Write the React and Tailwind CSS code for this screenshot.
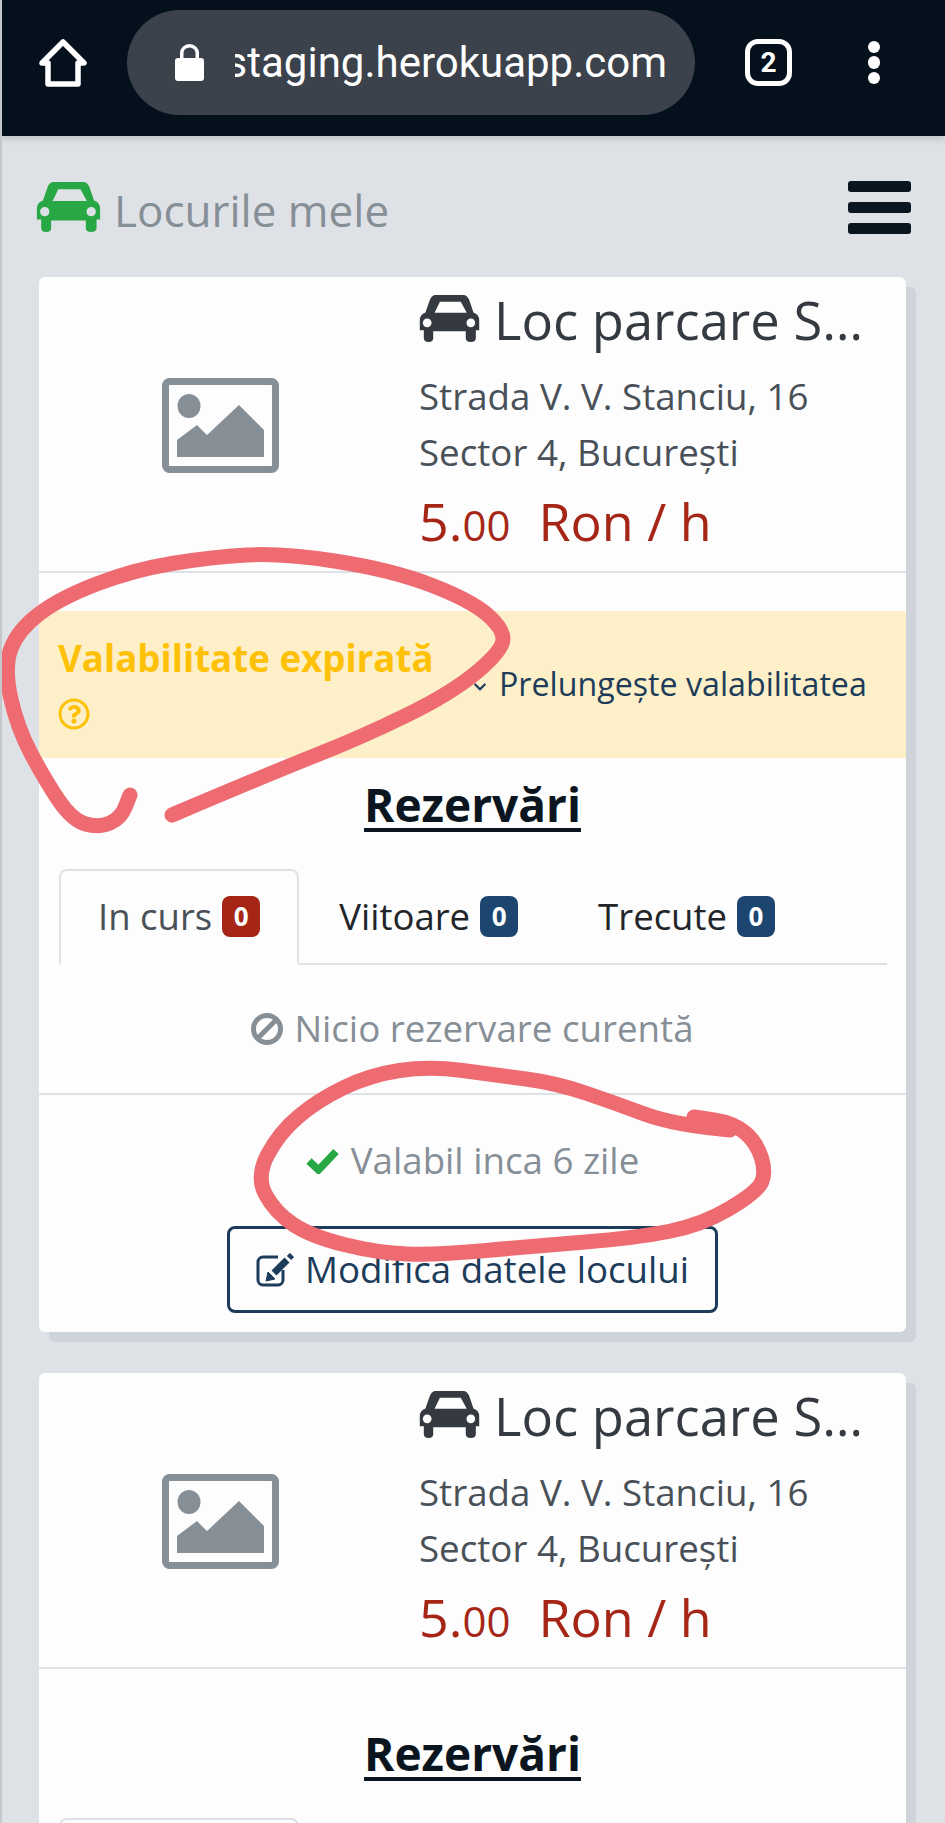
import React from 'react';
import { FaRegQuestionCircle, FaChevronDown } from 'react-icons/fa';

// marker scribbles drawn on top of the screenshot, in page coordinates
const loopOne = [[172,815],[271,773],[362,737],[452,693],[503,650],[503,628],[470,600],[392,570],[283,553],[211,557],[133,570],[60,598],[18,630],[4,667],[17,727],[45,780],[72,820],[99,828],[121,818],[130,795]];
const loopTwo = [[730,1130],[674,1125],[615,1103],[556,1083],[496,1075],[429,1066],[370,1075],[318,1100],[279,1133],[256,1177],[275,1212],[310,1236],[378,1253],[437,1255],[536,1246],[635,1238],[702,1225],[757,1192],[766,1173],[757,1143],[734,1123],[694,1117]];

function smooth(points) {
  let d = `M${points[0][0]} ${points[0][1]}`;
  for (let i = 1; i < points.length - 1; i++) {
    const mx = (points[i][0] + points[i + 1][0]) / 2;
    const my = (points[i][1] + points[i + 1][1]) / 2;
    d += ` Q${points[i][0]} ${points[i][1]} ${mx} ${my}`;
  }
  const last = points[points.length - 1];
  return d + ` L${last[0]} ${last[1]}`;
}

function CarIcon({ className }) {
  return (
    <svg viewBox="0 0 177 140" className={className} fill="currentColor" fillRule="evenodd">
      <path d="M47 0 H130 Q141 0 147 14 L160 52 Q177 58 177 75 V105 H167 V128 Q167 140 152 140 Q137 140 137 128 V108 H40 V128 Q40 140 26 140 Q12 140 12 128 V105 H0 V75 Q0 58 17 52 L30 14 Q36 0 47 0 Z M60 20 L44 53 H140 L122 20 Z M9 83 a13 13 0 1 0 26 0 a13 13 0 1 0 -26 0 Z M139 83 a13 13 0 1 0 26 0 a13 13 0 1 0 -26 0 Z" />
    </svg>
  );
}

function PlaceholderImage() {
  return (
    <svg viewBox="0 0 117 95" className="w-[117px] h-[95px]">
      <rect x="3.5" y="3.5" width="110" height="88" rx="4" fill="none" stroke="#868e96" strokeWidth="7" />
      <ellipse cx="27" cy="28" rx="11.5" ry="12" fill="#868e96" />
      <path d="M15 79 V62 L35 47 L45 57 L77 27 L102 52 V79 Z" fill="#868e96" />
    </svg>
  );
}

function BanIcon() {
  return (
    <svg viewBox="0 0 32 32" className="w-[32px] h-[32px] mr-[11px]" fill="none" stroke="currentColor" strokeWidth="5">
      <circle cx="16" cy="16" r="13.5" />
      <path d="M7 25 L25 7" />
    </svg>
  );
}

function CheckIcon() {
  return (
    <svg viewBox="0 0 33 26" className="w-[33px] h-[26px] mr-[12px]" fill="none" stroke="#28a745" strokeWidth="7.5">
      <path d="M3 13 L12.5 22 L30 3.5" />
    </svg>
  );
}

function EditIcon() {
  return (
    <svg viewBox="0 0 38 34" className="w-[38px] h-[34px] mr-[11px]" fill="none" stroke="currentColor" strokeWidth="3">
      <path d="M22 4 H7 a5 5 0 0 0 -5 5 V27 a5 5 0 0 0 5 5 H22 a5 5 0 0 0 5 -5 V17" />
      <path d="M18 20 L31 7" strokeWidth="7" />
      <path d="M33 5 L36 2" strokeWidth="6" />
      <path d="M10 28 L12 19 L19 26 Z" fill="currentColor" strokeWidth="1" />
    </svg>
  );
}

function Badge({ color, children }) {
  return (
    <span className={`inline-flex items-center justify-center w-[38px] h-[41px] rounded-lg text-white text-[26px] font-bold ml-[10px] ${color}`}>
      {children}
    </span>
  );
}

function Card({ expired }) {
  return (
    <div className="bg-[#fdfdfe] rounded-md shadow-[10px_10px_0_0_#ced4da] mb-[41px]">
      <div className="flex h-[296px] border-b-2 border-[#dee2e6]">
        <div className="w-[362px] flex items-center justify-center pt-[2px]">
          <PlaceholderImage />
        </div>
        <div className="ml-[18px] w-[448px] pt-[4px] text-[#343a40]">
          <div className="flex items-center h-[78px]">
            <CarIcon className="w-[61px] h-[47px] shrink-0 mr-[14px] -mt-[4px]" />
            <span className="truncate text-[52.5px] leading-[78px]">Loc parcare Stanciu</span>
          </div>
          <div className="text-[#495057] text-[36.7px] leading-[56px] mt-[9px]">
            <div>Strada V. V. Stanciu, 16</div>
            <div>Sector 4, București</div>
          </div>
          <div className="text-[#a52617] text-[52px] leading-[70px] mt-[6px]">
            5.<span className="text-[42px]">00</span>
            <span className="ml-[28px]">Ron / h</span>
          </div>
        </div>
      </div>

      <div className="pt-[38px]">
        {expired && (
          <div className="flex items-center h-[147px] bg-[#fdf0c9] pl-[19px]">
            <div className="w-[415px] text-[#ffc107] font-bold text-[36.7px] leading-[48px] pb-[6px]">
              <div className="whitespace-nowrap">Valabilitate expirată</div>
              <FaRegQuestionCircle className="w-[32px] h-[32px] mt-[16px]" />
            </div>
            <FaChevronDown className="w-[14px] h-[14px] text-[#1d3c5a] mr-[12px] mt-[4px]" />
            <span className="text-[#1d3c5a] text-[32.2px]">Prelungește valabilitatea</span>
          </div>
        )}

        <h2 className="text-center text-[#0b1520] font-bold text-[46px] leading-[53px] mt-[20px] underline decoration-[4px] underline-offset-[6px]">
          Rezervări
        </h2>

        <div className="flex mt-[38px] ml-[20px] mr-[19px] border-b-2 border-[#dee2e6] h-[96px] text-[36.5px]">
          <div className="flex items-center h-[96px] pl-[37px] pr-[37px] pb-[2px] bg-[#fdfdfe] border-2 border-[#dee2e6] border-b-[#fdfdfe] rounded-t-lg text-[#495057]">
            In curs<Badge color="bg-[#a52617]">0</Badge>
          </div>
          <div className="flex items-center h-[96px] px-[40px] pb-[2px] text-[#212529]">
            Viitoare<Badge color="bg-[#1c4670]">0</Badge>
          </div>
          <div className="flex items-center h-[96px] px-[40px] pb-[2px] text-[#212529]">
            Trecute<Badge color="bg-[#1c4670]">0</Badge>
          </div>
        </div>

        <div className="flex items-center justify-center h-[130px] border-b-2 border-[#dee2e6] text-[#868e96] text-[36.7px]">
          <BanIcon />
          Nicio rezervare curentă
        </div>

        <div className="flex items-center justify-center h-[131px] text-[#868e96] text-[36.7px]">
          <CheckIcon />
          Valabil inca 6 zile
        </div>

        <div className="flex justify-center pb-[19px]">
          <div className="flex items-center justify-center w-[491px] h-[87px] border-[3px] border-[#1d3c5a] rounded-lg text-[#1d3c5a] text-[36.7px]">
            <EditIcon />
            Modifică datele locului
          </div>
        </div>
      </div>
    </div>
  );
}

export default function App() {
  return (
    <div className="relative h-[1823px] overflow-hidden bg-[#dee2e6] font-['Open_Sans',sans-serif] border-l-2 border-[#c4c8cc]">
      <div className="flex items-center h-[136px] pb-[11px] -ml-[2px] bg-[#04101c] shadow-[0_4px_6px_rgba(0,0,0,0.12)]">
        <svg viewBox="0 0 48 48" className="w-[48px] h-[48px] ml-[39px]" fill="none" stroke="#fff" strokeWidth="5.5" strokeLinejoin="round">
          <path d="M24 3 L45 24 H39 V45 H9 V24 H3 Z" />
        </svg>
        <div className="flex items-center w-[568px] h-[105px] ml-[40px] rounded-full bg-[#3b424b] overflow-hidden">
          <svg viewBox="0 0 29 37" className="w-[29px] h-[37px] ml-[48px]" fill="#fff">
            <path d="M5 15 V9 a9.5 9 0 0 1 19 0 V15 H20.5 V9 a6 5.5 0 0 0 -12 0 V15 Z" />
            <rect x="0" y="14" width="29" height="23" rx="3" />
          </svg>
          <div className="w-[432px] ml-[31px] overflow-hidden flex justify-end">
            <span className="font-['Roboto',sans-serif] text-white text-[42px] whitespace-nowrap">staging.herokuapp.com</span>
          </div>
        </div>
        <div className="flex items-center justify-center w-[47px] h-[47px] ml-[50px] border-[5px] border-white rounded-[13px] text-white text-[28px] font-bold font-['Roboto',sans-serif]">
          2
        </div>
        <div className="flex flex-col gap-[3px] ml-[76px]">
          <span className="w-[12px] h-[12.5px] rounded-full bg-white" />
          <span className="w-[12px] h-[12.5px] rounded-full bg-white" />
          <span className="w-[12px] h-[12.5px] rounded-full bg-white" />
        </div>
      </div>

      <div className="flex items-center justify-between h-[141px] pl-[34px] pr-[34px]">
        <div className="flex items-center">
          <CarIcon className="w-[65px] h-[50px] text-[#28a745] mr-[13px]" />
          <span className="text-[#868e96] text-[44px] leading-[60px] mt-[6px]">Locurile mele</span>
        </div>
        <div className="flex flex-col gap-[10px] mt-[2px]">
          <span className="w-[63px] h-[11px] rounded-[3px] bg-[#0b1520]" />
          <span className="w-[63px] h-[11px] rounded-[3px] bg-[#0b1520]" />
          <span className="w-[63px] h-[11px] rounded-[3px] bg-[#0b1520]" />
        </div>
      </div>

      <div className="pl-[37px] pr-[39px]">
        <Card expired />
        <Card />
      </div>

      <svg className="absolute left-[-2px] top-0 w-[945px] h-[1823px] pointer-events-none" viewBox="0 0 945 1823" fill="none" stroke="#ee6b72" strokeWidth="15" strokeLinecap="round" strokeLinejoin="round">
        <path d={smooth(loopOne)} />
        <path d={smooth(loopTwo)} />
      </svg>
    </div>
  );
}
